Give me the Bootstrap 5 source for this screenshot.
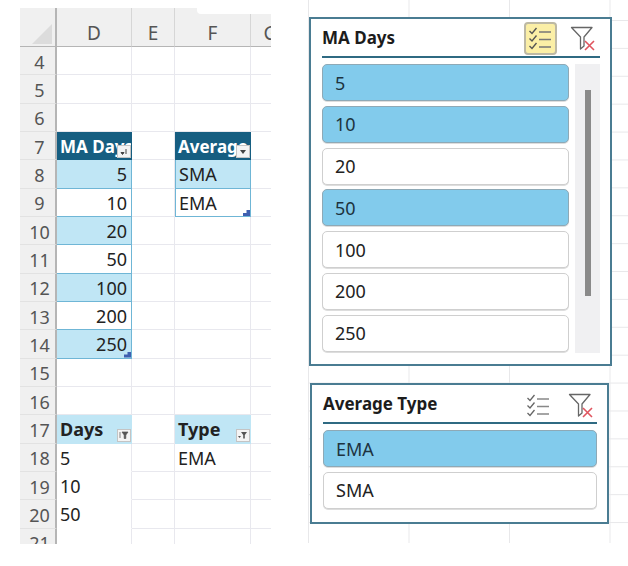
<!DOCTYPE html>
<html lang="en">
<head>
<meta charset="utf-8">
<title>Slicers</title>
<link href="https://cdn.jsdelivr.net/npm/bootstrap@5.3.0/dist/css/bootstrap.min.css" rel="stylesheet">
<style>
html,body{height:100%;background:#fff;overflow:hidden}
body{font-family:"Noto Sans","Liberation Sans",sans-serif;color:#222}
.stage{width:628px;height:566px;padding:8px 0 0 20px}
.sheet{width:251px;height:536px;display:grid;grid-template-columns:37px 75px 43px 76px 40px;grid-template-rows:39px repeat(18,28.33px);overflow:hidden;position:relative;font-size:18px;line-height:1}
.tabcut{position:absolute;top:0;right:0;width:74px;height:6px;background:#fff;border-bottom-left-radius:4px;z-index:2}
.corner{background:#f0f0f0;border-right:2px solid #b5b5b5;border-bottom:1px solid #b5b5b5;position:relative}
.corner::after{content:"";position:absolute;right:3px;bottom:2px;width:20px;height:20px;background:#dcdcdc;clip-path:polygon(100% 0,100% 100%,0 100%)}
.colh{background:#f0f0f0;color:#555;border-right:1px solid #d6d6d6;border-bottom:1px solid #b5b5b5;display:flex;align-items:flex-end;justify-content:center;padding-bottom:3px;font-size:19px}
.rowh{background:#f0f0f0;color:#555;border-right:2px solid #b5b5b5;border-bottom:1px solid #e2e2e2;display:flex;align-items:center;justify-content:center;padding:2px 0 0 4px}
.cel{border-right:1px solid #e8e8ee;border-bottom:1px solid #e8e8ee;display:flex;align-items:center;padding:1px 4px 0 3px;position:relative;color:#222;white-space:nowrap;overflow:hidden}
.num{justify-content:flex-end}
.head{background:#165e81;color:#fff;font-weight:700;font-size:17px;border-color:#165e81}
.band{background:#c0e6f5}
.tb{border-right:1px solid #6fb6d6;border-bottom:1px solid #6fb6d6}
.tl{border-left:1px solid #6fb6d6}
.sub{background:#c0e6f5;font-weight:700;border-bottom-color:#c0e6f5;border-right-color:#c0e6f5}
.plain{border-bottom-color:#fff}
.fbtn{position:absolute;right:0;bottom:1px;width:14px;height:13px;background:#f4f4f4;border:1px solid #c4c4c4;display:flex;align-items:center;justify-content:center}
.grip{position:absolute;right:0;bottom:0;width:7px;height:6px;background:#3f5fb0;clip-path:polygon(100% 0,100% 100%,0 100%,0 50%,50% 50%,50% 0)}
.canvas{position:absolute;left:308px;top:0;width:320px;height:543px;background-image:linear-gradient(#e8e8ea 1px,transparent 1px),linear-gradient(90deg,#e8e8ea 1px,transparent 1px);background-size:100% 27.9px,100.5px 100%;background-position:0 20px,0 0}
.slicer{position:absolute;background:#fff;border:2px solid #4a7c92;display:flex;flex-direction:column}
.slicer-a{left:1px;top:17px;width:303px;height:349px;padding:0 10px 0 11px}
.slicer-b{left:2px;top:383px;width:299px;height:141px;padding:0 10px 0 11px}
.slhead{height:39px;border-bottom:2px solid #2f6a82;display:flex;align-items:center;flex:none;position:relative;font-size:17px;font-weight:700;color:#1c1c1c;line-height:1}
.slbody{display:flex;gap:6px;margin-top:6px;min-height:0}
.opts{flex:1;display:flex;flex-direction:column;gap:4.8px;min-width:0}
.opts-b{margin-top:6px}
.opt{height:37px;flex:none;border:1px solid #cfcfcf;border-radius:5px;background:#fff;display:flex;align-items:center;padding-left:12px;font-size:18px;line-height:1;color:#222;box-shadow:0 1px 0 #ddd}
.opt.on{background:#82cbec;border-color:#8ea9b6;color:#1d3340}
.sbar{width:25px;height:289px;background:#f0f0f2;display:flex;justify-content:center;padding-top:26px}
.sthumb{width:6px;height:206px;background:#8a8a8a}
.tool{position:absolute;display:flex;align-items:center;justify-content:center}
.tool-a{left:202px;top:3px;width:33px;height:33px}
.tool-b{left:248px;top:6px;width:26px;height:26px}
.tool-c{left:203px;top:8px;width:25px;height:25px}
.tool-d{left:245px;top:7px;width:26px;height:26px}
.tool.active{background:#fbefa6;border:2px solid #bdb9a4;border-radius:4px}
</style>
</head>
<body>
<div class="stage position-relative">
  <div class="sheet">
    <div class="tabcut"></div>
    <div class="corner"></div><div class="colh">D</div><div class="colh">E</div><div class="colh">F</div><div class="colh">G</div>

    <div class="rowh">4</div><div class="cel"></div><div class="cel"></div><div class="cel"></div><div class="cel"></div>
    <div class="rowh">5</div><div class="cel"></div><div class="cel"></div><div class="cel"></div><div class="cel"></div>
    <div class="rowh">6</div><div class="cel"></div><div class="cel"></div><div class="cel"></div><div class="cel"></div>

    <div class="rowh">7</div>
    <div class="cel head">MA Days<span class="fbtn"><svg width="8" height="7" viewBox="0 0 8 7"><path d="M1 4.5h3L2.5 6.5zM6 1v5" fill="#444" stroke="#444" stroke-width="1"/></svg></span></div>
    <div class="cel"></div>
    <div class="cel head">Average<span class="fbtn"><svg width="8" height="6" viewBox="0 0 8 6"><path d="M1 1h6L4 5z" fill="#444"/></svg></span></div>
    <div class="cel"></div>

    <div class="rowh">8</div><div class="cel num band tb">5</div><div class="cel"></div><div class="cel band tb tl">SMA</div><div class="cel"></div>
    <div class="rowh">9</div><div class="cel num tb">10</div><div class="cel"></div><div class="cel tb tl">EMA<span class="grip"></span></div><div class="cel"></div>
    <div class="rowh">10</div><div class="cel num band tb">20</div><div class="cel"></div><div class="cel"></div><div class="cel"></div>
    <div class="rowh">11</div><div class="cel num tb">50</div><div class="cel"></div><div class="cel"></div><div class="cel"></div>
    <div class="rowh">12</div><div class="cel num band tb">100</div><div class="cel"></div><div class="cel"></div><div class="cel"></div>
    <div class="rowh">13</div><div class="cel num tb">200</div><div class="cel"></div><div class="cel"></div><div class="cel"></div>
    <div class="rowh">14</div><div class="cel num band tb">250<span class="grip"></span></div><div class="cel"></div><div class="cel"></div><div class="cel"></div>
    <div class="rowh">15</div><div class="cel"></div><div class="cel"></div><div class="cel"></div><div class="cel"></div>
    <div class="rowh">16</div><div class="cel"></div><div class="cel"></div><div class="cel"></div><div class="cel"></div>

    <div class="rowh">17</div>
    <div class="cel sub">Days<span class="fbtn"><svg width="10" height="8" viewBox="0 0 10 8"><path d="M3 1h6L6.8 4v3.5H5.2V4zM1 1v6" fill="#555" stroke="#555" stroke-width=".7"/></svg></span></div>
    <div class="cel"></div>
    <div class="cel sub">Type<span class="fbtn"><svg width="10" height="8" viewBox="0 0 10 8"><path d="M3 1h6L6.8 4v3.5H5.2V4z" fill="#555"/><path d="M0 5h3L1.5 7z" fill="#555"/></svg></span></div>
    <div class="cel"></div>

    <div class="rowh">18</div><div class="cel plain">5</div><div class="cel"></div><div class="cel">EMA</div><div class="cel"></div>
    <div class="rowh">19</div><div class="cel plain">10</div><div class="cel"></div><div class="cel"></div><div class="cel"></div>
    <div class="rowh">20</div><div class="cel plain">50</div><div class="cel"></div><div class="cel"></div><div class="cel"></div>
    <div class="rowh">21</div><div class="cel"></div><div class="cel"></div><div class="cel"></div><div class="cel"></div>
  </div>

  <div class="canvas">
    <div class="slicer slicer-a">
      <div class="slhead">MA Days
        <span class="tool tool-a active">
          <svg width="25" height="25" viewBox="0 0 25 25" fill="none"><path d="M1.5 5l2.5 2.5L8.5 2M1.5 12.5L4 15l4.5-5.5M1.5 20L4 22.5 8.5 17" stroke="#555" stroke-width="1.4"/><path d="M11 6h12M11 13.5h12M11 21h12" stroke="#777" stroke-width="1.6"/></svg>
        </span>
        <span class="tool tool-b">
          <svg width="26" height="26" viewBox="0 0 26 26" fill="none"><path d="M1.5 2.5h20.5L14 12v9l-3.5 3V12z" stroke="#666" stroke-width="1.3" stroke-linejoin="round"/><path d="M15 16l9 9M24 16l-9 9" stroke="#e0555f" stroke-width="1.6"/></svg>
        </span>
      </div>
      <div class="slbody">
        <div class="opts">
          <div class="opt on">5</div><div class="opt on">10</div><div class="opt">20</div><div class="opt on">50</div><div class="opt">100</div><div class="opt">200</div><div class="opt">250</div>
        </div>
        <div class="sbar"><div class="sthumb"></div></div>
      </div>
    </div>
    <div class="slicer slicer-b">
      <div class="slhead">Average Type
        <span class="tool tool-c">
          <svg width="25" height="25" viewBox="0 0 25 25" fill="none"><path d="M1.5 5l2.5 2.5L8.5 2M1.5 12.5L4 15l4.5-5.5M1.5 20L4 22.5 8.5 17" stroke="#666" stroke-width="1.3"/><path d="M11 6h12M11 13.5h12M11 21h12" stroke="#888" stroke-width="1.6"/></svg>
        </span>
        <span class="tool tool-d">
          <svg width="26" height="26" viewBox="0 0 26 26" fill="none"><path d="M1.5 2.5h20.5L14 12v9l-3.5 3V12z" stroke="#666" stroke-width="1.3" stroke-linejoin="round"/><path d="M15 16l9 9M24 16l-9 9" stroke="#e0555f" stroke-width="1.6"/></svg>
        </span>
      </div>
      <div class="opts opts-b">
        <div class="opt on">EMA</div><div class="opt">SMA</div>
      </div>
    </div>
  </div>
</div>
<script src="https://cdn.jsdelivr.net/npm/bootstrap@5.3.0/dist/js/bootstrap.bundle.min.js"></script>
</body>
</html>
